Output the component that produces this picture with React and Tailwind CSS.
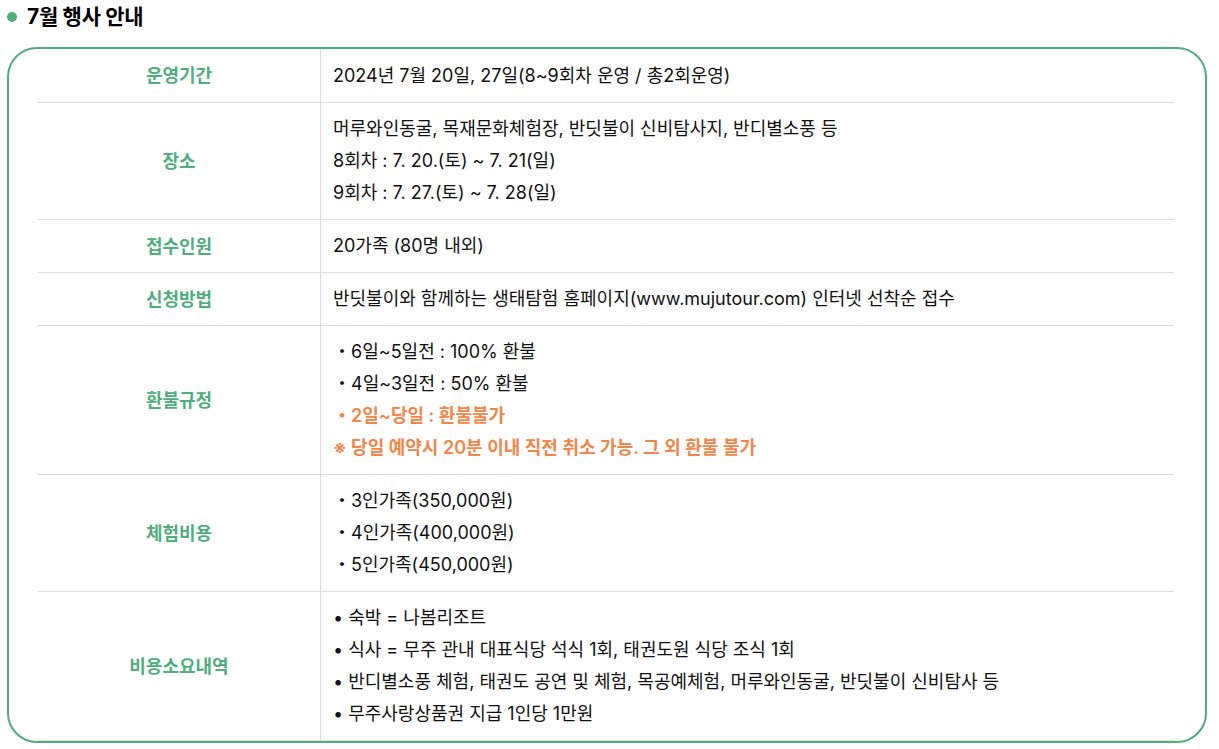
export default function App() {
  const rows = [
    { label: "운영기간", lines: [<span key="a">2024년 7월 20일, 27일(8~9회차 운영 / 총2회운영)</span>] },
    {
      label: "장소",
      lines: [
        <span key="a">머루와인동굴, 목재문화체험장, 반딧불이 신비탐사지, 반디별소풍 등</span>,
        <span key="b">8회차 : 7. 20.(토) ~ 7. 21(일)</span>,
        <span key="c">9회차 : 7. 27.(토) ~ 7. 28(일)</span>,
      ],
    },
    { label: "접수인원", lines: [<span key="a">20가족 (80명 내외)</span>] },
    { label: "신청방법", lines: [<span key="a">반딧불이와 함께하는 생태탐험 홈페이지(www.mujutour.com) 인터넷 선착순 접수</span>] },
    {
      label: "환불규정",
      lines: [
        <span key="a">・6일~5일전 : 100% 환불</span>,
        <span key="b">・4일~3일전 : 50% 환불</span>,
        <span key="c" className="text-[#f0864a] font-semibold">・2일~당일 : 환불불가</span>,
        <span key="d" className="text-[#f0864a] font-semibold">※ 당일 예약시 20분 이내 직전 취소 가능. 그 외 환불 불가</span>,
      ],
    },
    {
      label: "체험비용",
      lines: [
        <span key="a">・3인가족(350,000원)</span>,
        <span key="b">・4인가족(400,000원)</span>,
        <span key="c">・5인가족(450,000원)</span>,
      ],
    },
    {
      label: "비용소요내역",
      lines: [
        <span key="a">• 숙박 = 나봄리조트</span>,
        <span key="b">• 식사 = 무주 관내 대표식당 석식 1회, 태권도원 식당 조식 1회</span>,
        <span key="c">• 반디별소풍 체험, 태권도 공연 및 체험, 목공예체험, 머루와인동굴, 반딧불이 신비탐사 등</span>,
        <span key="d">• 무주사랑상품권 지급 1인당 1만원</span>,
      ],
    },
  ];
  return (
    <div className="w-[1219px] h-[749px] bg-white" style={{ fontFamily: 'Inter, "Noto Sans CJK KR", sans-serif' }}>
      <div className="flex items-center h-[34px] pl-[7px]">
        <span className="w-[10px] h-[10px] rounded-full bg-[#4fae7e] mr-[10px]"></span>
        <span className="text-[21px] font-bold text-black tracking-[-0.3px]">7월 행사 안내</span>
      </div>
      <div className="ml-[7px] mt-[13px] w-[1200px] h-[696px] border-2 border-[#4fae7e] rounded-[30px] pl-[29px] pr-[31px] overflow-hidden">
        <div className="flex flex-col">
          {rows.map((r, i) => (
            <div key={i} className={`flex ${i > 0 ? "border-t border-[#dcdcdc]" : ""} ${i === rows.length - 1 ? "border-b border-[#dcdcdc]" : ""}`}>
              <div className="w-[283px] shrink-0 flex items-center justify-center border-r border-[#dcdcdc] text-[18px] font-semibold text-[#4fae7e]">
                {r.label}
              </div>
              <div className={`flex flex-col ${i === 0 ? "pt-[11px] pb-[10px]" : "py-[10px]"} pl-[12px] text-[18px] leading-[32px] text-[#111]`}>
                {r.lines}
              </div>
            </div>
          ))}
        </div>
      </div>
    </div>
  );
}
